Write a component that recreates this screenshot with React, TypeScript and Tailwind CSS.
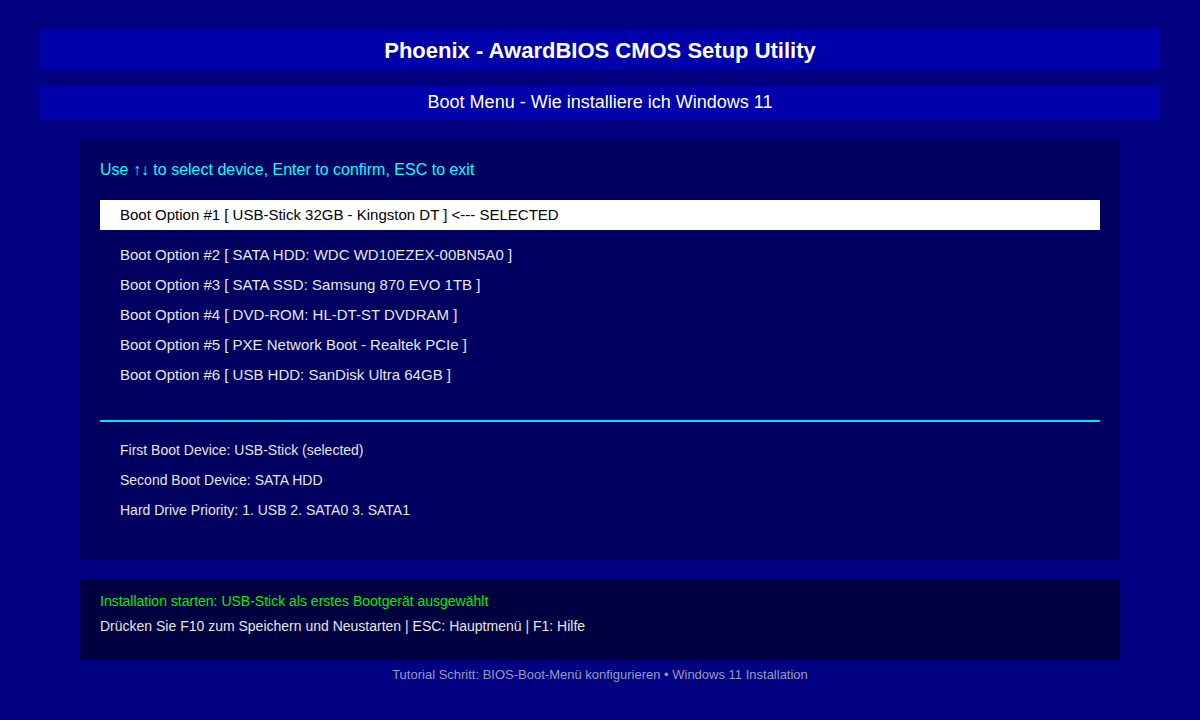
const bootOptions = [
  "Boot Option #2 [ SATA HDD: WDC WD10EZEX-00BN5A0 ]",
  "Boot Option #3 [ SATA SSD: Samsung 870 EVO 1TB ]",
  "Boot Option #4 [ DVD-ROM: HL-DT-ST DVDRAM ]",
  "Boot Option #5 [ PXE Network Boot - Realtek PCIe ]",
  "Boot Option #6 [ USB HDD: SanDisk Ultra 64GB ]",
];

const infoLines = [
  "First Boot Device: USB-Stick (selected)",
  "Second Boot Device: SATA HDD",
  "Hard Drive Priority: 1. USB 2. SATA0 3. SATA1",
];

export default function App() {
  return (
    <div className="min-h-[720px] bg-[#000080] px-10 pt-[30px] font-['Liberation_Sans',Arial,sans-serif]">
      <div className="flex h-10 items-center justify-center bg-[#0000aa] text-[22px] font-bold text-white">
        Phoenix - AwardBIOS CMOS Setup Utility
      </div>
      <div className="mt-[15px] flex h-[35px] items-center justify-center bg-[#0000aa] text-[18px] text-white">
        Boot Menu - Wie installiere ich Windows 11
      </div>

      <div className="mx-10 mt-5 h-[420px] bg-[#000060] px-5 pt-5">
        <div className="flex h-[20px] items-center text-[16px] text-[#00ffff]">
          Use ↑↓ to select device, Enter to confirm, ESC to exit
        </div>

        <div className="mt-5 flex h-[30px] items-center bg-white px-5 text-[15px] text-black">
          Boot Option #1 [ USB-Stick 32GB - Kingston DT ] &lt;--- SELECTED
        </div>
        <div className="mt-[10px]">
          {bootOptions.map((opt) => (
            <div key={opt} className="flex h-[30px] items-center px-5 text-[15px] text-[#e6e6e6]">
              {opt}
            </div>
          ))}
        </div>

        <div className="mt-[30px] h-[2px] bg-[#00e5ee]" />

        <div className="mt-[13px]">
          {infoLines.map((line) => (
            <div key={line} className="flex h-[30px] items-center px-5 text-[14px] text-[#e6e6e6]">
              {line}
            </div>
          ))}
        </div>
      </div>

      <div className="mx-10 mt-5 h-20 bg-[#000040] px-5 pt-[11px]">
        <div className="flex h-[20px] items-center text-[14px] text-[#00ee00]">
          Installation starten: USB-Stick als erstes Bootgerät ausgewählt
        </div>
        <div className="mt-[5px] flex h-[20px] items-center text-[14px] text-[#e6e6e6]">
          Drücken Sie F10 zum Speichern und Neustarten | ESC: Hauptmenü | F1: Hilfe
        </div>
      </div>

      <div className="mt-[7px] flex h-[16px] items-center justify-center text-[13px] text-[#9a9ac0]">
        Tutorial Schritt: BIOS-Boot-Menü konfigurieren • Windows 11 Installation
      </div>
    </div>
  );
}
